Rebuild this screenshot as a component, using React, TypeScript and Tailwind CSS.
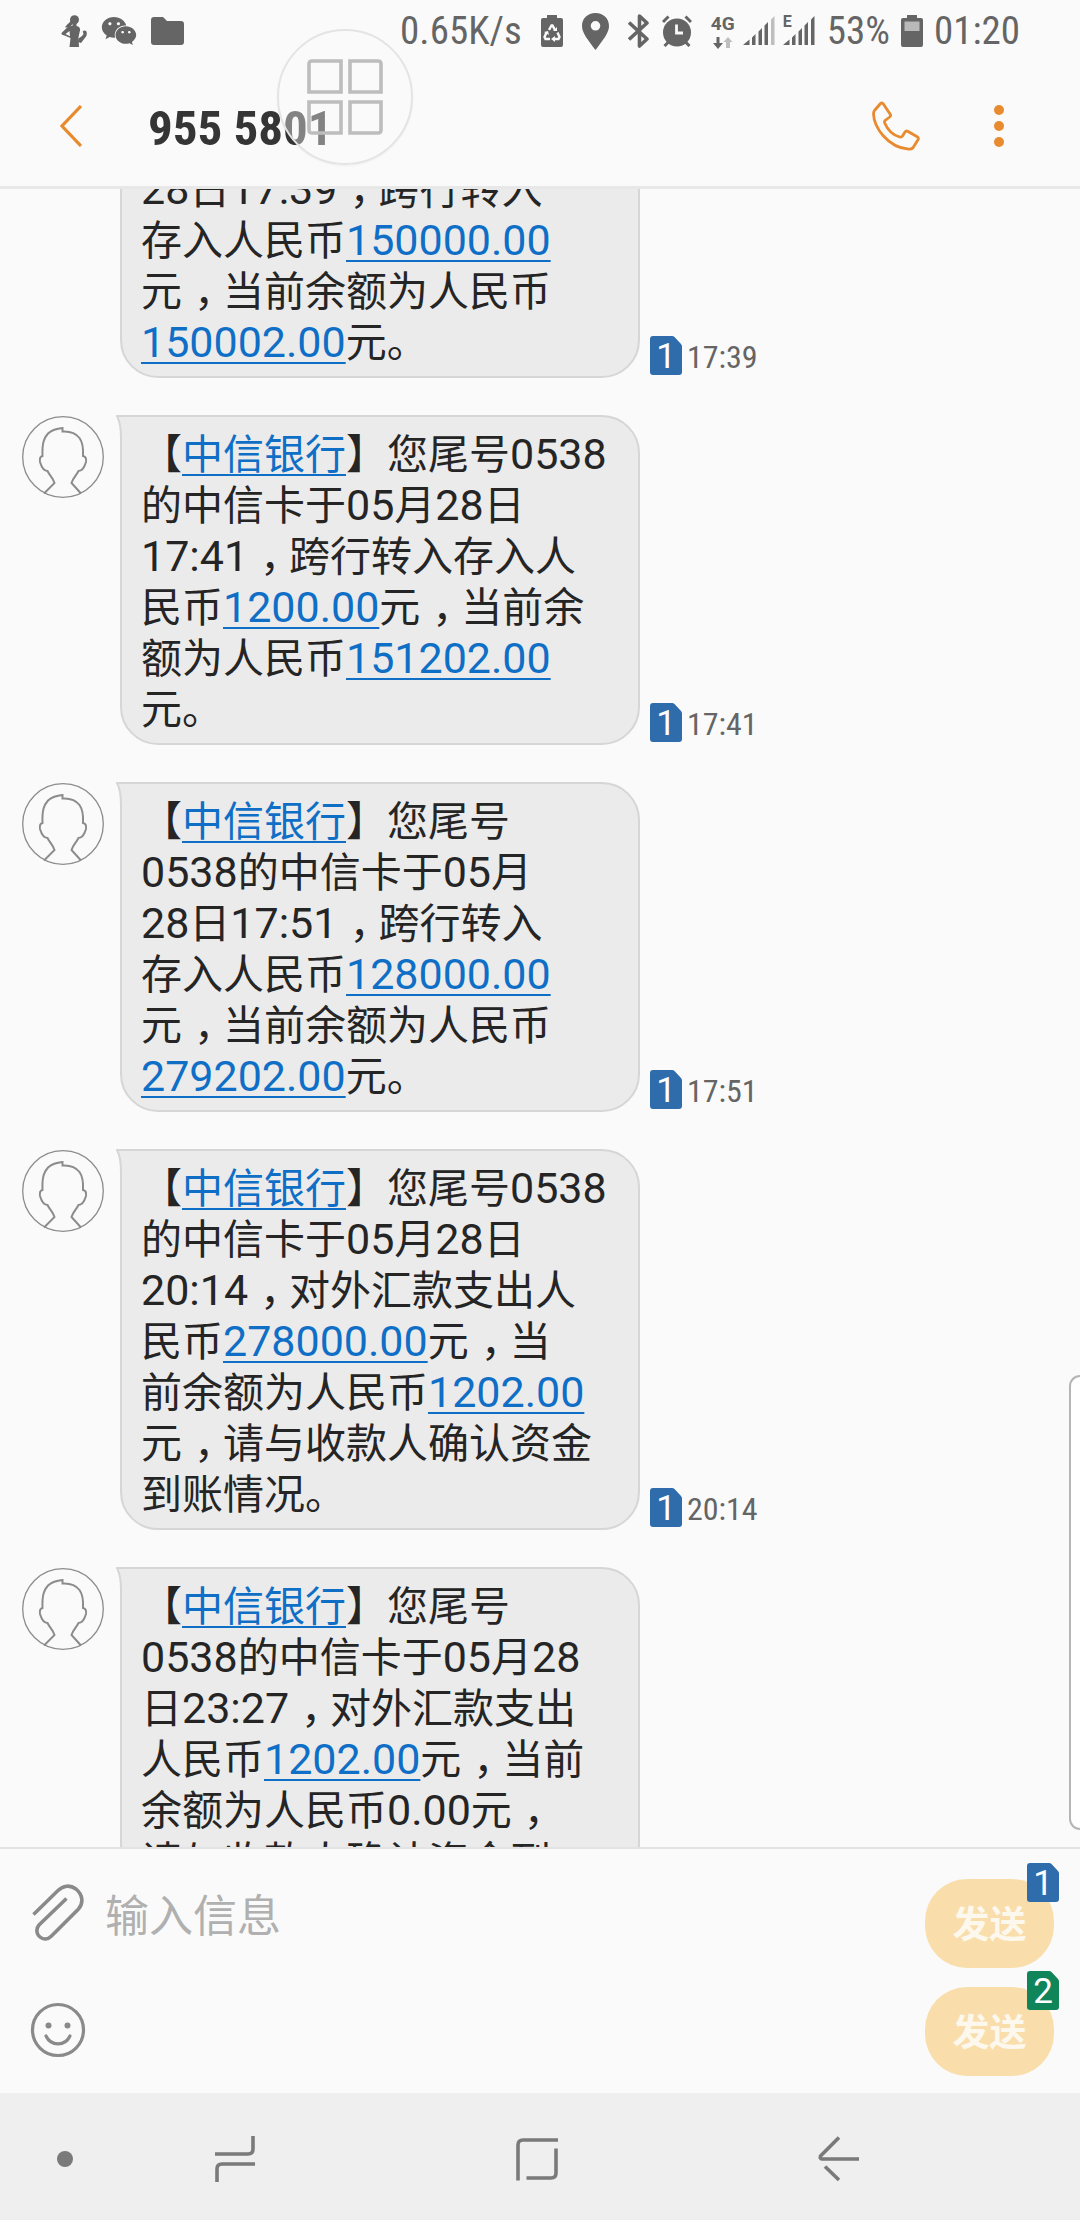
import type { ReactNode } from 'react';
import { FaWeixin } from 'react-icons/fa';

type Message = {
  time: string;
  lines: string[];
  // only the tail of the bubble is in view, so it has no avatar
  partial?: boolean;
};

// [text] marks a link inside a line
const messages: Message[] = [
  {
    time: '17:39',
    partial: true,
    lines: [
      '28日17:39，跨行转入',
      '存入人民币[150000.00]',
      '元，当前余额为人民币',
      '[150002.00]元。',
    ],
  },
  {
    time: '17:41',
    lines: [
      '【[中信银行]】您尾号0538',
      '的中信卡于05月28日',
      '17:41，跨行转入存入人',
      '民币[1200.00]元，当前余',
      '额为人民币[151202.00]',
      '元。',
    ],
  },
  {
    time: '17:51',
    lines: [
      '【[中信银行]】您尾号',
      '0538的中信卡于05月',
      '28日17:51，跨行转入',
      '存入人民币[128000.00]',
      '元，当前余额为人民币',
      '[279202.00]元。',
    ],
  },
  {
    time: '20:14',
    lines: [
      '【[中信银行]】您尾号0538',
      '的中信卡于05月28日',
      '20:14，对外汇款支出人',
      '民币[278000.00]元，当',
      '前余额为人民币[1202.00]',
      '元，请与收款人确认资金',
      '到账情况。',
    ],
  },
  {
    time: '',
    lines: [
      '【[中信银行]】您尾号',
      '0538的中信卡于05月28',
      '日23:27，对外汇款支出',
      '人民币[1202.00]元，当前',
      '余额为人民币0.00元，',
      '请与收款人确认资金到',
    ],
  },
];

function SimBadge({ sim, className = '' }: { sim: 1 | 2; className?: string }) {
  return (
    <span className={`relative block h-[39px] w-8 text-white ${className}`}>
      <svg viewBox="0 0 32 39" className={`absolute inset-0 ${sim === 1 ? 'text-[#2f6cab]' : 'text-[#11855a]'}`} aria-hidden="true">
        <path fill="currentColor" d="M3 0h19q1.500 0 2.500 1l6.500 7q1 1 1 2.500V36q0 3-3 3H3q-3 0-3-3V3Q0 0 3 0z" />
      </svg>
      <span className="relative block text-center text-[35px] leading-[41px]">{sim}</span>
    </span>
  );
}

function Avatar() {
  return (
    <svg viewBox="0 0 82 82" className="mt-px size-[82px] shrink-0" fill="none" stroke="#8c8c8c" aria-hidden="true">
      <circle cx="41" cy="41" r="40.300" strokeWidth="1.300" />
      <path
        strokeWidth="2"
        d="M22 77.500 32.500 67C31 62 28 60 25.500 55c-4 0-6-4-7.500-9-.5-3 .5-5.500 2.500-6C20 27 22 22 26 17.500c4-3.500 9-5 14.500-5.500v3.500c9-.5 14 2.500 17 6.500 3.500 5 4 10 3.500 18 2.500.5 3.500 3 3 6-1.500 5-4 9-7.500 9C54 60 51 62 49.500 67L59 77.500"
      />
    </svg>
  );
}

function renderText(text: string): ReactNode[] {
  return text.split(/([\d:.]+|，)/).filter(Boolean).map((part, i) => {
    if (part === '，') {
      return <span key={i} className="inline-block w-[41px] pl-3 align-top">{part}</span>;
    }
    return /^[\d:.]+$/.test(part) ? <span key={i} className="text-[43px] leading-none">{part}</span> : part;
  });
}

function MessageLine({ line }: { line: string }) {
  return (
    <span className="block whitespace-nowrap">
      {line.split(/(\[[^\]]+\])/).filter(Boolean).map((part, i) =>
        part.startsWith('[') ? (
          <a key={i} href="#" className="text-[#0f6fc6] underline decoration-2 underline-offset-[5px]">
            {renderText(part.slice(1, -1))}
          </a>
        ) : (
          <span key={i}>{renderText(part)}</span>
        ),
      )}
    </span>
  );
}

function MessageRow({ message }: { message: Message }) {
  return (
    <li className="flex">
      {message.partial ? <div className="w-[82px] shrink-0" /> : <Avatar />}
      <div className="relative ml-4 w-[520px] shrink-0 rounded-[38px] rounded-tl-none border-2 border-[#d6d6d6] bg-[#ebebeb] px-[19px] pt-[13px] pb-[7px]">
        <svg viewBox="0 0 8 24" className="absolute -top-[2px] -left-[6px] h-6 w-2" aria-hidden="true">
          <path fill="#ebebeb" d="M0 0h8v24H5Q5 8 0 0z" />
          <path fill="none" stroke="#d6d6d6" strokeWidth="2" d="M8 1H1Q5 8 5 24" />
        </svg>
        <p className="relative text-[41px] leading-[51px] text-[#252525]">
          {message.lines.map((line) => (
            <MessageLine key={line} line={line} />
          ))}
        </p>
      </div>
      {message.time && (
        <div className="ml-[10px] flex items-end gap-[5px] pb-[3px]">
          <SimBadge sim={1} />
          <time className="font-['Roboto_Condensed',Roboto,sans-serif] text-[32px] leading-9 text-[#656565]">{message.time}</time>
        </div>
      )}
    </li>
  );
}

function Signal({ weak = false }: { weak?: boolean }) {
  return (
    <svg viewBox="0 0 32 30" className="h-[30px] w-8" fill="currentColor" aria-hidden="true">
      <path d="M0 29 6.500 23.500V29zM9 21.500l3.500-3.500v11H9zM15.500 15.500 19 12v17h-3.500zM21.500 9.500 25 6v23h-3.500z" />
      <path d="M28 3.500 31.500 0v29H28z" opacity={weak ? 0.4 : 1} />
    </svg>
  );
}

function StatusBar() {
  return (
    <div className="flex h-[62px] shrink-0 items-center pr-[60px] pl-[61px] font-['Roboto_Condensed',Roboto,sans-serif] text-[39px] leading-none text-[#656565]">
      <div className="flex items-center gap-[14px]">
        <svg viewBox="0 0 26 32" className="h-8 w-[26px]" fill="currentColor" aria-hidden="true">
          <circle cx="13.500" cy="4.800" r="4.500" />
          <path d="M10 4.500C9 8.500 6 8.500 4 12.500l5-.3 2.500-3.200z" />
          <path d="M11.500 8h4v3q4 .5 3.500 4.500-1 4-1.500 7l.5 9.500H8.500l1-9-6-2.500Q-1 20 1 17.500L7 11.800l4.500-1zM8.500 16 4.500 19l4.500 2.200z" fillRule="evenodd" />
          <path d="M17.500 23.500l3.500-2.500 1.500-2-.8-2.500q1.800-2 3.800 0 .8 3-.5 5l-5 6.500-3-1z" />
        </svg>
        <FaWeixin size={36} aria-hidden="true" />
        <svg viewBox="0 0 33 28" className="h-7 w-[33px]" fill="currentColor" aria-hidden="true">
          <path d="M3 0h9l4 4h14q3 0 3 3v18q0 3-3 3H3q-3 0-3-3V3q0-3 3-3z" />
        </svg>
      </div>
      <div className="ml-auto flex items-center gap-[19px]">
        <span>0.65K/s</span>
        <svg viewBox="0 0 22 32" className="h-8 w-[22px]" aria-hidden="true">
          <path fill="currentColor" d="M6 0h10v3h4q2 0 2 2v25q0 2-2 2H2q-2 0-2-2V5q0-2 2-2h4z" />
          <path fill="none" stroke="#fafafa" strokeWidth="2.400" d="M8 15l2.500-4.500h1L14 15M5.500 17.500 3.500 22l1 2H9M16.500 17.500 18.500 22l-1 2H12" />
          <path fill="#fafafa" d="M12 16h4v-4zM3 17l4-1 1 4zM14 21v6l-4-3z" />
        </svg>
        <svg viewBox="0 0 27 37" className="h-[37px] w-[27px]" aria-hidden="true">
          <path fill="currentColor" fillRule="evenodd" d="M13.500 0C21.500 0 27 5.500 27 13 27 20 21 27 13.500 37 6 27 0 20 0 13 0 5.500 5.500 0 13.500 0zM13.500 8a4.800 4.800 0 1 0 0 9.600 4.800 4.800 0 0 0 0-9.600z" />
        </svg>
        <div className="flex items-center gap-3">
          <svg viewBox="0 0 22 34" className="h-[34px] w-[22px]" fill="none" stroke="currentColor" strokeWidth="3.600" strokeLinejoin="round" aria-hidden="true">
            <path d="M1 8.500 19 25l-7.500 7V2L19 9 1 25.500" />
          </svg>
          <svg viewBox="0 0 30 32" className="h-8 w-[30px]" aria-hidden="true">
            <circle cx="15" cy="17.500" r="14" fill="currentColor" />
            <path fill="none" stroke="currentColor" strokeWidth="3" d="M1 7l5.500-5.500M29 7l-5.500-5.500M2.500 31 7 26.500M27.500 31 23 26.500" />
            <path fill="none" stroke="#fafafa" strokeWidth="2.800" d="M14.500 9.500v8.500H21" />
          </svg>
        </div>
        <div className="flex items-center gap-2">
          <div className="flex w-6 flex-col items-center gap-[3px]">
            <span className="font-[Roboto,sans-serif] text-[19px] leading-5 font-bold">4G</span>
            <svg viewBox="0 0 20 12" className="h-3 w-5" fill="currentColor" aria-hidden="true">
              <path d="M3.500 0h3v6H10l-5 6L0 6h3.500z" />
              <path opacity=".4" d="M15 0l4.500 5H17v6h-4V5h-2.500z" />
            </svg>
          </div>
          <Signal weak />
          <div className="relative">
            <span className="absolute -top-[2px] left-0 font-[Roboto,sans-serif] text-base leading-4 font-bold">E</span>
            <Signal />
          </div>
        </div>
      </div>
      <div className="ml-3 flex items-center gap-[11px]">
        <span>53%</span>
        <svg viewBox="0 0 22 32" className="h-8 w-[22px]" aria-hidden="true">
          <path fill="currentColor" d="M6 0h10v3h4q2 0 2 2v25q0 2-2 2H2q-2 0-2-2V5q0-2 2-2h4z" />
          <path fill="#b9b9b9" d="M3.500 6.500h15V16h-15z" />
        </svg>
        <span>01:20</span>
      </div>
    </div>
  );
}

function Header() {
  return (
    <header className="flex h-[127px] shrink-0 items-center border-b-[3px] border-[#e8e8e8] pt-1 pr-[76px] pl-[60px] text-[#e88a2e]">
      <button type="button" aria-label="返回">
        <svg viewBox="0 0 22 42" className="h-[42px] w-[22px]" fill="none" stroke="currentColor" strokeWidth="3.200">
          <path d="M21 1 2 21l19 20" />
        </svg>
      </button>
      <h1 className="ml-[66px] pt-1 font-['Roboto_Condensed',Roboto,sans-serif] text-[49px] leading-none font-bold text-[#353535]">955 5801</h1>
      <button type="button" aria-label="拨打电话" className="ml-auto">
        <svg viewBox="0 0 48 50" className="h-[50px] w-12" fill="none" stroke="currentColor" strokeWidth="2.800" strokeLinejoin="round">
          <path d="M8.500 2.500q1.500-1.200 2.700.3l7 10.500q1 1.500-.5 2.700l-4 3q-1.700 1.200-1 3 5 11.500 15 14 1.800.4 2.800-1l2.500-4q1-1.500 2.700-.8l9.500 5.500q1.800 1.200.8 3l-5 8q-1.500 1.700-4.500 1.500Q22 47 11 34.500 2 24 1.500 13q0-2 1-3.500z" />
        </svg>
      </button>
      <button type="button" aria-label="更多选项" className="ml-[74px] flex w-[10px] flex-col gap-[6px]">
        <span className="size-[10px] rounded-full bg-current" />
        <span className="size-[10px] rounded-full bg-current" />
        <span className="size-[10px] rounded-full bg-current" />
      </button>
    </header>
  );
}

function SendButton({ sim }: { sim: 1 | 2 }) {
  return (
    <button type="button" aria-label={`发送 ${sim}`} className="relative h-[89px] w-[129px] rounded-[42px] bg-[#f9deab] pt-1 text-[37px] font-bold text-[#fdf8ee]">
      发送
      <SimBadge sim={sim} className="absolute! -top-4 -right-[5px] font-normal" />
    </button>
  );
}

function Composer() {
  return (
    <footer className="flex h-[246px] shrink-0 justify-between border-t-2 border-[#e3e3e3] pr-[26px] pl-[30px] text-[#8a8a8a]">
      <div className="flex flex-1 flex-col">
        <div className="mt-[34px] flex items-center">
          <button type="button" aria-label="添加附件">
            <svg viewBox="0 0 56 58" className="h-[58px] w-14" fill="none" stroke="currentColor" strokeWidth="3.600">
              <path d="M3.500 31.500 28 7.500c5-5 12-6 18-1.500 6.500 5.500 8 13.500 2.500 20L21.500 53c-3.500 3.500-8 4-11.500 1-4-3.500-4-8.500-1-12L36.500 15.500" />
            </svg>
          </button>
          <input
            type="text"
            aria-label="输入信息"
            placeholder="输入信息"
            className="ml-[19px] h-[58px] min-w-0 flex-1 bg-transparent pt-[10px] text-[44px] text-[#252525] outline-none placeholder:text-[#b0b0b0]"
          />
        </div>
        <button type="button" aria-label="表情" className="mt-[61px] w-14">
          <svg viewBox="0 0 56 56" className="size-14" fill="none" stroke="currentColor" strokeWidth="3.200">
            <circle cx="28" cy="28" r="25.500" />
            <path strokeLinecap="round" d="M16 34c5 10.500 19 10.500 24 0" />
            <circle cx="18.500" cy="23.500" r="3" fill="currentColor" stroke="none" />
            <circle cx="37.500" cy="23.500" r="3" fill="currentColor" stroke="none" />
          </svg>
        </button>
      </div>
      <div className="flex flex-col gap-[19px] pt-[30px]">
        <SendButton sim={1} />
        <SendButton sim={2} />
      </div>
    </footer>
  );
}

function NavigationBar() {
  return (
    <nav className="flex h-[127px] shrink-0 items-center bg-[#efefef] pt-1 pr-[90px] text-[#7a7a7a]">
      <button type="button" aria-label="隐藏导航栏" className="flex w-[84px] justify-end pr-[11px]">
        <span className="size-4 rounded-full bg-current" />
      </button>
      <div className="flex flex-1 items-center *:flex *:flex-1 *:justify-center">
        <button type="button" aria-label="最近任务">
          <svg viewBox="0 0 42 48" className="h-12 w-[42px]" fill="none" stroke="currentColor" strokeWidth="3.600">
            <path d="M39 1v13q0 5-5 5H1M3 47V34q0-5 5-5h33" />
          </svg>
        </button>
        <button type="button" aria-label="主屏幕">
          <svg viewBox="0 0 42 44" className="h-11 w-[42px]" fill="none" stroke="currentColor" strokeWidth="3.600">
            <path d="M2 43.500V8q0-5 5-5h35M40 11.500V36q0 5-5 5H10.500" />
          </svg>
        </button>
        <button type="button" aria-label="返回">
          <svg viewBox="0 0 42 46" className="h-[46px] w-[42px]" fill="none" stroke="currentColor" strokeWidth="3.600">
            <path strokeLinejoin="round" d="M21 1.500 2.500 20q-1 3 2 3H41" />
            <path d="M7 30.500 21 44" />
          </svg>
        </button>
      </div>
    </nav>
  );
}

function FloatingButton() {
  return (
    <button
      type="button"
      aria-label="悬浮菜单"
      className="absolute top-[29px] left-[277px] flex size-[136px] items-center justify-center rounded-full border-2 border-[#e4e4e4] bg-[#fafafa]/40 shadow-xs"
    >
      <svg viewBox="0 0 76 76" className="size-[76px]" fill="none" stroke="#bdbdbd" strokeWidth="3.600">
        <path d="M2 5q0-3 3-3h29v31H2zM43 2h28q3 0 3 3v28H43zM2 43h32v31H5q-3 0-3-3zM43 43h31v28q0 3-3 3H43z" />
      </svg>
    </button>
  );
}

export default function App() {
  return (
    <div className="relative flex h-screen flex-col overflow-hidden bg-[#fafafa] font-[Roboto,'Noto_Sans_CJK_SC',sans-serif]" lang="zh-CN">
      <StatusBar />
      <Header />
      <main className="relative min-h-0 flex-1 overflow-hidden">
        {/* scrolled up so the oldest message is cut by the header */}
        <ul className="-mt-[39px] flex flex-col gap-[37px] pl-[22px]">
          {messages.map((message) => (
            <MessageRow key={message.lines.join()} message={message} />
          ))}
        </ul>
        <div className="absolute right-0 bottom-[17px] h-[455px] w-[11px] rounded-l-xl border-2 border-r-0 border-[#b5b5b5] bg-white" />
      </main>
      <Composer />
      <NavigationBar />
      <FloatingButton />
    </div>
  );
}
